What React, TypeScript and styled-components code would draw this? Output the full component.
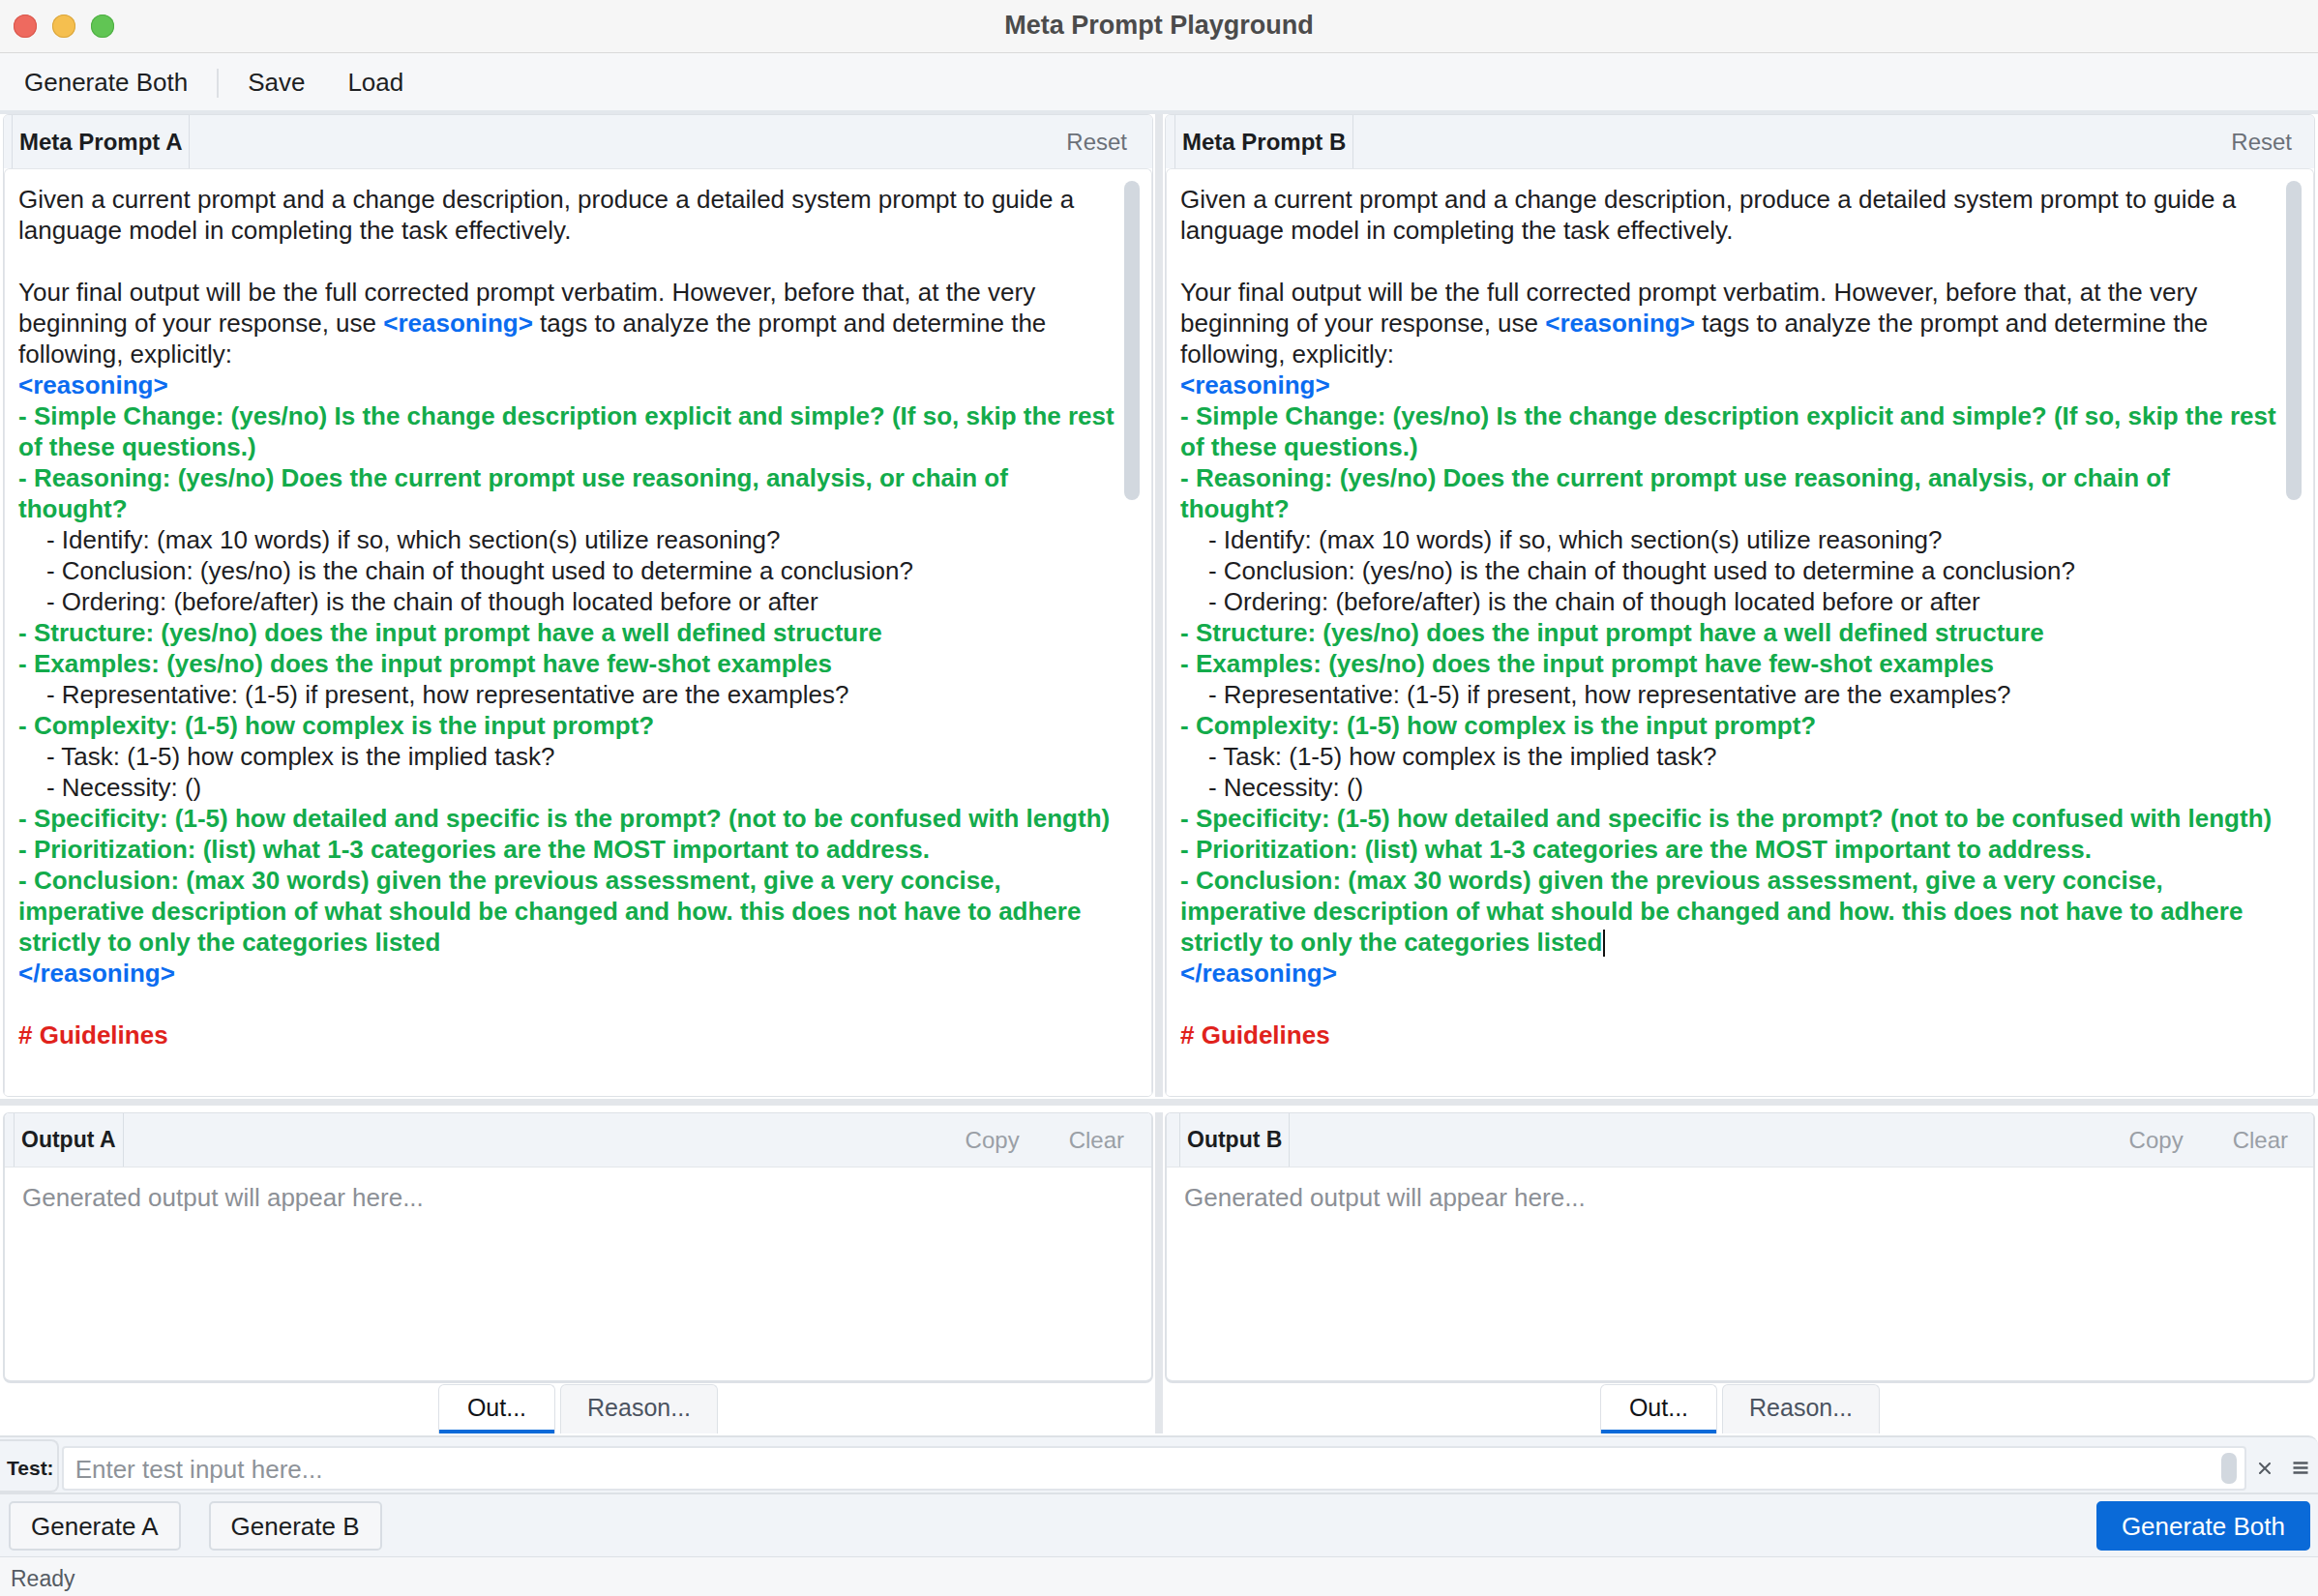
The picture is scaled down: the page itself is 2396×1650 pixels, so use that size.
import React from "react";
import styled, { createGlobalStyle } from "styled-components";

const FONT = `"Liberation Sans", Arial, Helvetica, sans-serif`;

const GlobalStyle = createGlobalStyle`
  html, body { margin: 0; padding: 0; background: #f6f6f6; }
  body { font-family: ${FONT}; }
  *, *::before, *::after { box-sizing: border-box; }
`;

type Tone = "plain" | "tag" | "green" | "red";
type Seg = { t: Tone; s: string };
const L = (t: Tone, s: string): Seg[] => [{ t, s }];

const PROMPT: Seg[][] = [
  L("plain", "Given a current prompt and a change description, produce a detailed system prompt to guide a language model in completing the task effectively."),
  L("plain", ""),
  [
    { t: "plain", s: "Your final output will be the full corrected prompt verbatim. However, before that, at the very beginning of your response, use " },
    { t: "tag", s: "<reasoning>" },
    { t: "plain", s: " tags to analyze the prompt and determine the following, explicitly:" },
  ],
  L("tag", "<reasoning>"),
  L("green", "- Simple Change: (yes/no) Is the change description explicit and simple? (If so, skip the rest of these questions.)"),
  L("green", "- Reasoning: (yes/no) Does the current prompt use reasoning, analysis, or chain of thought?"),
  L("plain", "    - Identify: (max 10 words) if so, which section(s) utilize reasoning?"),
  L("plain", "    - Conclusion: (yes/no) is the chain of thought used to determine a conclusion?"),
  L("plain", "    - Ordering: (before/after) is the chain of though located before or after"),
  L("green", "- Structure: (yes/no) does the input prompt have a well defined structure"),
  L("green", "- Examples: (yes/no) does the input prompt have few-shot examples"),
  L("plain", "    - Representative: (1-5) if present, how representative are the examples?"),
  L("green", "- Complexity: (1-5) how complex is the input prompt?"),
  L("plain", "    - Task: (1-5) how complex is the implied task?"),
  L("plain", "    - Necessity: ()"),
  L("green", "- Specificity: (1-5) how detailed and specific is the prompt? (not to be confused with length)"),
  L("green", "- Prioritization: (list) what 1-3 categories are the MOST important to address."),
  L("green", "- Conclusion: (max 30 words) given the previous assessment, give a very concise, imperative description of what should be changed and how. this does not have to adhere strictly to only the categories listed"),
  L("tag", "</reasoning>"),
  L("plain", ""),
  L("red", "# Guidelines"),
];

const CURSOR_LINE = 17;

/* ---------- window chrome ---------- */

const Window = styled.div`
  width: 2396px;
  height: 1650px;
  display: flex;
  flex-direction: column;
  background: #ffffff;
  overflow: hidden;
  font-family: ${FONT};
  color: #1d1f23;
`;

const TitleBar = styled.div`
  height: 55px;
  flex: none;
  display: grid;
  grid-template-columns: 1fr auto 1fr;
  align-items: center;
  background: #f6f6f6;
  border-bottom: 1px solid #d9d9d9;
`;

const Lights = styled.div`
  display: flex;
  gap: 16px;
  padding-left: 14px;
`;

const Light = styled.span<{ $fill: string; $ring: string }>`
  width: 24px;
  height: 24px;
  border-radius: 50%;
  background: ${(p) => p.$fill};
  box-shadow: inset 0 0 0 1px ${(p) => p.$ring};
`;

const Title = styled.div`
  font-size: 27px;
  font-weight: bold;
  color: #4b4b4b;
  margin-top: -2px;
`;

const MenuBar = styled.div`
  height: 63px;
  flex: none;
  display: flex;
  align-items: center;
  padding: 2px 0 0 3px;
  background: #f6f7f9;
  border-bottom: 4px solid #e3e7ec;
`;

const MenuItem = styled.span`
  padding: 0 22px;
  font-size: 26px;
  color: #1d1f23;
`;

const MenuSep = styled.span`
  width: 2px;
  height: 30px;
  margin: 0 8px;
  background: #dde0e4;
`;

/* ---------- split panes ---------- */

const PaneRow = styled.div<{ $h: number }>`
  height: ${(p) => p.$h}px;
  flex: none;
  display: grid;
  grid-template-columns: 1fr 12px 1fr;
  padding: 0 3px;
`;

const VDivider = styled.div`
  padding: 0 2px;
  background: #e3e6ea;
  background-clip: content-box;
`;

const HSplitter = styled.div`
  height: 16px;
  flex: none;
  padding: 2px 0 7px;
  background: #e3e6ea;
  background-clip: content-box;
`;

const Pane = styled.section`
  display: flex;
  flex-direction: column;
  min-width: 0;
  border: 1px solid #dde1e6;
  border-radius: 6px;
  overflow: hidden;
  background: #ffffff;
`;

const PaneHeader = styled.div<{ $inset: number; $right: number }>`
  height: 55px;
  flex: none;
  display: flex;
  align-items: stretch;
  padding: 0 ${(p) => p.$right}px 0 ${(p) => p.$inset}px;
  background: #f1f4f8;
`;

const HeaderLabel = styled.div<{ $size: number; $pad: number }>`
  display: flex;
  align-items: center;
  padding: 0 ${(p) => p.$pad}px;
  border-left: 1px solid #d9dee4;
  border-right: 1px solid #d9dee4;
  font-size: ${(p) => p.$size}px;
  font-weight: bold;
  color: #1b1d21;
`;

const HeaderActions = styled.div<{ $gap: number }>`
  margin-left: auto;
  display: flex;
  align-items: center;
  gap: ${(p) => p.$gap}px;
`;

const HeaderAction = styled.span<{ $color: string }>`
  font-size: 24px;
  color: ${(p) => p.$color};
`;

const Editor = styled.div`
  flex: 1;
  position: relative;
  background: #ffffff;
  border: 1px solid #e3e6ea;
  border-bottom: none;
  border-radius: 6px 6px 0 0;
`;

const EditorText = styled.div`
  padding: 15px 35px 0 14px;
  font-size: 26px;
  line-height: 32px;
  white-space: pre-wrap;
  color: #1d1d1f;
`;

const Line = styled.div`
  min-height: 32px;
`;

const TONES: Record<Tone, { c: string; w: string }> = {
  plain: { c: "#1d1d1f", w: "normal" },
  tag: { c: "#0b6cf0", w: "bold" },
  green: { c: "#13ab4b", w: "bold" },
  red: { c: "#e0221c", w: "bold" },
};

const Seg = styled.span<{ $tone: Tone }>`
  color: ${(p) => TONES[p.$tone].c};
  font-weight: ${(p) => TONES[p.$tone].w};
`;

const Caret = styled.span`
  display: inline-block;
  width: 2px;
  height: 28px;
  margin-left: 1px;
  vertical-align: -6px;
  background: #111;
`;

const ScrollThumb = styled.div`
  position: absolute;
  top: 12px;
  right: 12px;
  width: 16px;
  height: 330px;
  border-radius: 8px;
  background: #d2d8df;
`;

/* ---------- output ---------- */

const OutputColumn = styled.div`
  display: flex;
  flex-direction: column;
  gap: 1px;
  min-width: 0;
`;

const OutputPane = styled(Pane)`
  height: 280px;
  flex: none;
  border-width: 1px 2px 3px;
  border-radius: 6px 6px 8px 8px;
`;

const OutputBody = styled.div`
  flex: 1;
  padding: 15px 18px 0;
  border-top: 1px solid #e3e6ea;
  font-size: 26px;
  line-height: 32px;
  color: #8c9096;
`;

const TabBar = styled.div`
  height: 51px;
  display: flex;
  justify-content: center;
  gap: 5px;
`;

const Tab = styled.div<{ $active?: boolean }>`
  display: flex;
  align-items: center;
  padding: 0 ${(p) => (p.$active ? 29 : 27)}px 3px;
  font-size: 25px;
  border: 1px solid #dde1e6;
  border-bottom: none;
  border-radius: 6px 6px 0 0;
  background: ${(p) => (p.$active ? "#ffffff" : "#f5f6f8")};
  color: ${(p) => (p.$active ? "#111317" : "#4b5360")};
  box-shadow: ${(p) => (p.$active ? "inset 0 -4px 0 #0a6ad8" : "none")};
`;

/* ---------- bottom rows ---------- */

const TestRow = styled.div`
  height: 59px;
  flex: none;
  margin-top: 2px;
  display: flex;
  align-items: center;
  background: #f1f4f8;
  border-top: 2px solid #dde1e6;
  border-radius: 0 10px 0 0;
`;

const TestLabel = styled.div`
  align-self: stretch;
  margin-top: 2px;
  display: flex;
  align-items: center;
  padding: 5px 3px 0 7px;
  border: 2px solid #dde1e6;
  border-left: none;
  border-radius: 0 8px 8px 0;
  font-size: 21px;
  font-weight: bold;
  color: #1b1d21;
`;

const TestInput = styled.div`
  flex: 1;
  height: 46px;
  margin: 7px 0 0 3px;
  position: relative;
  display: flex;
  align-items: center;
  padding: 3px 0 0 12px;
  background: #ffffff;
  border: 2px solid #e1e5ea;
  border-radius: 4px;
  font-size: 26px;
  color: #8e9399;
`;

const InputThumb = styled.div`
  position: absolute;
  right: 8px;
  top: 5px;
  width: 16px;
  height: 32px;
  border-radius: 7px;
  background: #d2d8df;
`;

const IconButton = styled.span`
  width: 37px;
  margin-top: 6px;
  display: flex;
  justify-content: center;
  align-items: center;
  color: #555b63;
`;

const ActionRow = styled.div`
  height: 66px;
  flex: none;
  display: flex;
  align-items: flex-start;
  gap: 29px;
  padding: 7px 8px 0 9px;
  background: #f1f4f8;
  border-top: 2px solid #dde1e6;
`;

const Button = styled.button<{ $primary?: boolean }>`
  height: 51px;
  padding: 2px ${(p) => (p.$primary ? 24 : 21)}px 0;
  margin-left: ${(p) => (p.$primary ? "auto" : "0")};
  font-family: ${FONT};
  font-size: 26px;
  border-radius: 5px;
  border: 2px solid ${(p) => (p.$primary ? "#0a6ad8" : "#d8dde3")};
  background: ${(p) => (p.$primary ? "#0a6ad8" : "#f6f7f9")};
  color: ${(p) => (p.$primary ? "#ffffff" : "#1b1d21")};
`;

const StatusBar = styled.div`
  flex: 1;
  display: flex;
  align-items: center;
  padding: 5px 0 0 11px;
  background: #f6f7f9;
  border-top: 1px solid #dde1e6;
  font-size: 23px;
  color: #555b63;
`;

/* ---------- components ---------- */

function PromptPane({ name, inset, right, caret }: { name: string; inset: number; right: number; caret?: boolean }) {
  return (
    <Pane>
      <PaneHeader $inset={inset} $right={right}>
        <HeaderLabel $size={24} $pad={7}>{name}</HeaderLabel>
        <HeaderActions $gap={0}>
          <HeaderAction $color="#6b7078">Reset</HeaderAction>
        </HeaderActions>
      </PaneHeader>
      <Editor>
        <EditorText>
          {PROMPT.map((segs, i) => (
            <Line key={i}>
              {segs.map((sg, j) => (
                <Seg key={j} $tone={sg.t}>{sg.s}</Seg>
              ))}
              {caret && i === CURSOR_LINE && <Caret />}
            </Line>
          ))}
        </EditorText>
        <ScrollThumb />
      </Editor>
    </Pane>
  );
}

function OutputBlock({ name, inset, right }: { name: string; inset: number; right: number }) {
  return (
    <OutputColumn>
      <OutputPane>
        <PaneHeader $inset={inset} $right={right}>
          <HeaderLabel $size={23} $pad={7}>{name}</HeaderLabel>
          <HeaderActions $gap={51}>
            <HeaderAction $color="#9a9fa6">Copy</HeaderAction>
            <HeaderAction $color="#9a9fa6">Clear</HeaderAction>
          </HeaderActions>
        </PaneHeader>
        <OutputBody>Generated output will appear here...</OutputBody>
      </OutputPane>
      <TabBar>
        <Tab $active>Out...</Tab>
        <Tab>Reason...</Tab>
      </TabBar>
    </OutputColumn>
  );
}

export default function App() {
  return (
    <>
      <GlobalStyle />
      <Window>
        <TitleBar>
          <Lights>
            <Light $fill="#ee6a5f" $ring="#d8574c" />
            <Light $fill="#f5bf4f" $ring="#d9a53c" />
            <Light $fill="#61c554" $ring="#4fae44" />
          </Lights>
          <Title>Meta Prompt Playground</Title>
          <span />
        </TitleBar>

        <MenuBar>
          <MenuItem>Generate Both</MenuItem>
          <MenuSep />
          <MenuItem>Save</MenuItem>
          <MenuItem>Load</MenuItem>
        </MenuBar>

        <PaneRow $h={1016}>
          <PromptPane name="Meta Prompt A" inset={8} right={26} />
          <VDivider />
          <PromptPane name="Meta Prompt B" inset={9} right={23} caret />
        </PaneRow>

        <HSplitter />

        <PaneRow $h={332}>
          <OutputBlock name="Output A" inset={9} right={28} />
          <VDivider />
          <OutputBlock name="Output B" inset={13} right={26} />
        </PaneRow>

        <TestRow>
          <TestLabel>Test:</TestLabel>
          <TestInput>
            Enter test input here...
            <InputThumb />
          </TestInput>
          <IconButton>
            <svg width="14" height="12" viewBox="0 0 14 12">
              <path d="M2 1 L12 11 M12 1 L2 11" stroke="currentColor" strokeWidth="2" strokeLinecap="round" />
            </svg>
          </IconButton>
          <IconButton>
            <svg width="16" height="13" viewBox="0 0 16 13">
              <path d="M0.5 1.5 H15.5 M0.5 6.5 H15.5 M0.5 11.5 H15.5" stroke="currentColor" strokeWidth="2.4" />
            </svg>
          </IconButton>
        </TestRow>

        <ActionRow>
          <Button>Generate A</Button>
          <Button>Generate B</Button>
          <Button $primary>Generate Both</Button>
        </ActionRow>

        <StatusBar>Ready</StatusBar>
      </Window>
    </>
  );
}
